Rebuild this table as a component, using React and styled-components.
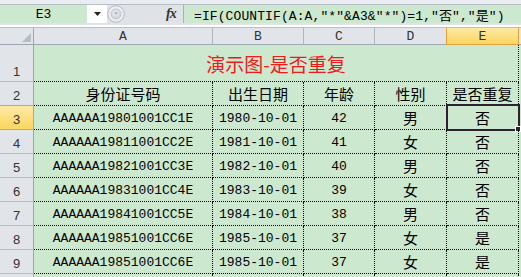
import React from 'react';
import styled, { createGlobalStyle } from 'styled-components';

const GlobalStyle = createGlobalStyle`
  body {
    margin: 0;
    background: #fff;
  }
`;

const Window = styled.div`
  width: 521px;
  height: 277px;
  overflow: hidden;
  background: #dfe3e8;
  font-family: "Liberation Mono", "Noto Sans CJK SC", monospace;
  color: #000;
`;

const TopStrip = styled.div`
  height: 4px;
  background: #e9ecf0;
  border-bottom: 1px solid #b7bec7;
`;

const InputRow = styled.div`
  display: flex;
  height: 18px;
  align-items: stretch;
`;

const NameBox = styled.div`
  width: 87px;
  background: #cce8cf;
  display: flex;
  align-items: center;
  justify-content: center;
  font-size: 13px;
`;

const Dropdown = styled.div`
  width: 20px;
  background: #fff;
  display: flex;
  align-items: center;
  justify-content: center;
`;

const Knob = styled.div`
  width: 59px;
  display: flex;
  align-items: center;
  overflow: hidden;
`;

const FxLabel = styled.div`
  width: 17px;
  display: flex;
  align-items: center;
  font-family: "Liberation Serif", serif;
  font-style: italic;
  font-weight: bold;
  font-size: 14px;
  color: #333;
  letter-spacing: -1px;
`;

const Divider = styled.div`
  width: 1px;
  background: #a9b1bb;
`;

const Formula = styled.div`
  flex: 1;
  background: #cce8cf;
  display: flex;
  align-items: center;
  padding-left: 10px;
  font-size: 13px;
  letter-spacing: 0.1px;
  white-space: nowrap;
  overflow: hidden;
`;

const UnderStrip = styled.div`
  height: 5px;
  background: linear-gradient(#dfe3e8 0 2px, #fff 2px 4px, #b9c0c9 4px 5px);
`;

const Sheet = styled.div`
  display: grid;
  grid-template-columns: 34px 179px 91px 71px 72px 72px 2px;
  grid-template-rows: 17px 37px repeat(9, 24px);
  background: #cce8cf;
`;

const Corner = styled.div`
  box-sizing: border-box;
  background: #e1e4e9;
  border-right: 1px solid #9ea6b1;
  border-bottom: 1px solid #9ea6b1;
  display: flex;
  align-items: flex-end;
  justify-content: flex-end;
  padding: 0 2px 2px 0;
`;

const ColHead = styled.div`
  box-sizing: border-box;
  display: flex;
  align-items: center;
  justify-content: center;
  font-size: 13px;
  color: #333;
  background: ${p => (p.$active ? 'linear-gradient(#fde9a6, #fbd65e)' : '#e1e4e9')};
  border-right: 1px solid ${p => (p.$active ? '#e2a13c' : '#aeb5bf')};
  border-bottom: 1px solid ${p => (p.$active ? '#e2a13c' : '#9ea6b1')};
  box-shadow: ${p => (p.$active ? '-1px 0 0 #e2a13c' : 'none')};
`;

const RowHead = styled.div`
  box-sizing: border-box;
  display: flex;
  align-items: flex-end;
  justify-content: center;
  padding-bottom: 2px;
  font-family: "Liberation Sans", sans-serif;
  font-size: 13px;
  color: #333;
  background: ${p => (p.$active ? 'linear-gradient(#fde9a6, #fbd65e)' : '#e1e4e9')};
  border-right: 1px solid ${p => (p.$active ? '#e2a13c' : '#9ea6b1')};
  border-bottom: 1px solid ${p => (p.$active ? '#e2a13c' : '#b6bdc7')};
  box-shadow: ${p => (p.$active ? '0 -1px 0 #e2a13c' : 'none')};
`;

const Cell = styled.div`
  position: relative;
  box-sizing: border-box;
  display: flex;
  align-items: center;
  justify-content: center;
  padding-top: ${p => (p.$cjk ? '0' : '2px')};
  border-right: 1px dotted #000;
  border-bottom: 1px dotted #000;
  font-family: ${p => (p.$cjk ? '"Noto Sans CJK SC", sans-serif' : '"Liberation Mono", "Noto Sans CJK SC", monospace')};
  font-size: ${p => (p.$cjk ? '15px' : '13px')};
  white-space: nowrap;
`;

const Title = styled(Cell)`
  grid-column: 2 / span 5;
  color: #f01a1a;
  font-size: 19px;
  padding-top: 0;
  font-family: "Noto Sans CJK SC", sans-serif;
`;

const Edge = styled.div`
  background: ${p => (p.$head ? '#e1e4e9' : '#cce8cf')};
  border-bottom: ${p => (p.$head ? '1px solid #9ea6b1' : 'none')};
  box-sizing: border-box;
`;

const Selection = styled.div`
  position: absolute;
  left: -1px;
  right: -2px;
  top: -2px;
  bottom: -2px;
  border: 2px solid #2e1f31;
  pointer-events: none;
`;

const Handle = styled.div`
  position: absolute;
  right: -3px;
  bottom: -3px;
  width: 6px;
  height: 6px;
  box-sizing: border-box;
  background: #2e1f31;
  border: 1px solid #fff;
`;

const columns = ['A', 'B', 'C', 'D', 'E'];
const headers = ['身份证号码', '出生日期', '年龄', '性别', '是否重复'];
const rows = [
  ['AAAAAA19801001CC1E', '1980-10-01', '42', '男', '否'],
  ['AAAAAA19811001CC2E', '1981-10-01', '41', '女', '否'],
  ['AAAAAA19821001CC3E', '1982-10-01', '40', '男', '否'],
  ['AAAAAA19831001CC4E', '1983-10-01', '39', '女', '否'],
  ['AAAAAA19841001CC5E', '1984-10-01', '38', '男', '否'],
  ['AAAAAA19851001CC6E', '1985-10-01', '37', '女', '是'],
  ['AAAAAA19851001CC6E', '1985-10-01', '37', '女', '是'],
];

const App = () => {
  return (
    <>
      <GlobalStyle />
      <Window>
        <TopStrip />
        <InputRow>
          <NameBox>E3</NameBox>
          <Dropdown>
            <svg width="7" height="4" viewBox="0 0 7 4">
              <polygon points="0,0 7,0 3.5,4" fill="#222" />
            </svg>
          </Dropdown>
          <Knob>
            <svg width="18" height="18" viewBox="0 0 18 18">
              <defs>
                <radialGradient id="kg" cx="0.45" cy="0.4" r="0.6">
                  <stop offset="0" stopColor="#f4f5f7" />
                  <stop offset="1" stopColor="#c9ced5" />
                </radialGradient>
              </defs>
              <circle cx="9" cy="9" r="8.3" fill="#eceef1" stroke="#b5bbc4" />
              <circle cx="9" cy="9" r="5" fill="url(#kg)" stroke="#c3c8cf" />
              <circle cx="9" cy="8" r="1.6" fill="#b3b9c2" />
            </svg>
          </Knob>
          <FxLabel>fx</FxLabel>
          <Divider />
          <Formula>=IF(COUNTIF(A:A,"*"&amp;A3&amp;"*")=1,"否","是")</Formula>
        </InputRow>
        <UnderStrip />
        <Sheet>
          <Corner>
            <svg width="9" height="9" viewBox="0 0 9 9">
              <polygon points="9,0 9,9 0,9" fill="#b7bdc5" />
            </svg>
          </Corner>
          {columns.map(c => (
            <ColHead key={c} $active={c === 'E'}>{c}</ColHead>
          ))}
          <Edge $head />

          <RowHead>1</RowHead>
          <Title>演示图-是否重复</Title>
          <Edge />

          <RowHead>2</RowHead>
          {headers.map(h => (
            <Cell key={h} $cjk>{h}</Cell>
          ))}
          <Edge />

          {rows.map((r, i) => (
            <React.Fragment key={i}>
              <RowHead $active={i === 0}>{i + 3}</RowHead>
              <Cell>{r[0]}</Cell>
              <Cell>{r[1]}</Cell>
              <Cell>{r[2]}</Cell>
              <Cell $cjk>{r[3]}</Cell>
              <Cell $cjk>
                {r[4]}
                {i === 0 && (
                  <Selection>
                    <Handle />
                  </Selection>
                )}
              </Cell>
              <Edge />
            </React.Fragment>
          ))}

          <RowHead />
          <Cell />
          <Cell />
          <Cell />
          <Cell />
          <Cell />
          <Edge />
        </Sheet>
      </Window>
    </>
  );
};

export default App;
